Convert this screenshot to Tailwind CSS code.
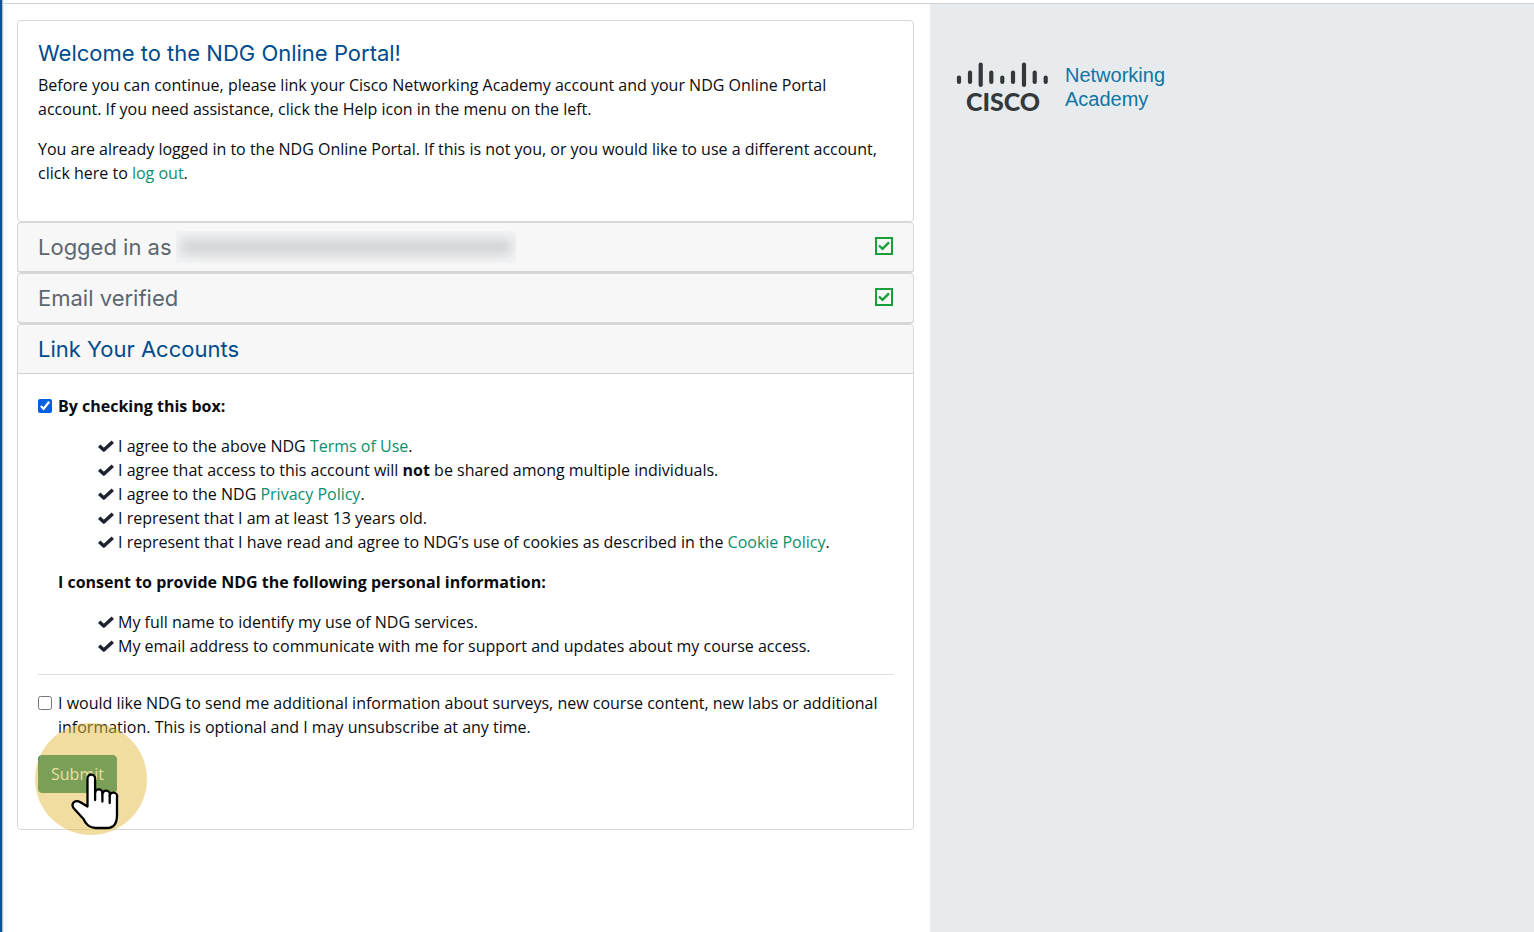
<!DOCTYPE html>
<html lang="en">
<head>
<meta charset="utf-8">
<meta name="viewport" content="width=device-width, initial-scale=1">
<title>NDG Online Portal</title>
<script src="https://cdn.jsdelivr.net/npm/@tailwindcss/browser@4"></script>
</head>
<body class="min-h-screen flex flex-col bg-white font-['Open_Sans',sans-serif] text-base text-[#0a0c0f]">
<svg class="hidden" aria-hidden="true">
  <symbol id="tick" viewBox="0 0 16 12"><path d="M1.200 5.800 L5.800 10 L14.800 1.800" fill="none" stroke="#1d242b" stroke-width="3.500" stroke-linejoin="round"/></symbol>
  <symbol id="boxtick" viewBox="0 0 18 18"><path d="M1 1H17V17H1Z" fill="none" stroke="currentColor" stroke-width="2"/><path d="M4 8.500 L7.500 11.800 L14 5.300" fill="none" stroke="currentColor" stroke-width="2.400"/></symbol>
</svg>
<div class="h-1 shrink-0 border-b border-[#cfd2d4]"></div>
<div class="grid flex-1 grid-cols-[4px_minmax(0,926fr)_minmax(0,604fr)]">
  <div class="-mt-1 border-l-2 border-[#0056a4] bg-linear-to-r from-[#a9a9b4] to-white"></div>
  <main class="pl-[13px] pr-4 pt-4 pb-6">
    <section class="rounded border border-[#d7d7d7] p-5">
      <h1 class="mb-2 font-[Inter,sans-serif] text-[22px] leading-6 text-[#004b8d]">Welcome to the NDG Online Portal!</h1>
      <p class="mb-4">Before you can continue, please link your Cisco Networking Academy account and your NDG Online Portal account. If you need assistance, click the Help icon in the menu on the left.</p>
      <p class="mb-4">You are already logged in to the NDG Online Portal. If this is not you, or you would like to use a different account, click here to <a href="#" class="text-[#0a8f6d]">log out</a>.</p>
    </section>
    <section class="flex h-[51px] items-center rounded border border-b-2 border-[#d7d7d7] bg-[#f7f7f7] px-5">
      <h2 class="font-[Inter,sans-serif] text-[22px] leading-6 text-[#5c666f]">Logged in as</h2>
      <div class="ml-1 flex h-8 w-[340px] items-center overflow-hidden bg-[#f3f4f5]"><div class="mx-1 h-4 w-full bg-[#d1d3d5] blur-[6px]"></div></div>
      <svg class="mb-0.5 ml-auto size-[18px] text-[#1a9e3a]" role="img" aria-label="Complete"><use href="#boxtick"/></svg>
    </section>
    <section class="flex h-[51px] items-center rounded border border-b-2 border-[#d7d7d7] bg-[#f7f7f7] px-5">
      <h2 class="font-[Inter,sans-serif] text-[22px] leading-6 text-[#5c666f]">Email verified</h2>
      <svg class="mb-0.5 ml-auto size-[18px] text-[#1a9e3a]" role="img" aria-label="Complete"><use href="#boxtick"/></svg>
    </section>
    <section class="rounded border border-[#d7d7d7]">
      <div class="rounded-t border-b border-[#cfcfcf] bg-[#f7f7f7] px-5 py-3">
        <h2 class="font-[Inter,sans-serif] text-[22px] leading-6 text-[#004b8d]">Link Your Accounts</h2>
      </div>
      <form class="p-5">
        <div class="mb-4 flex items-center gap-[6px]"><input id="agree" type="checkbox" checked class="size-[14px] accent-[#0060df]"><label for="agree" class="font-bold">By checking this box:</label></div>
        <ul class="mb-4 pl-[60px]">
          <li class="flex items-center gap-1"><svg class="h-3 w-4 shrink-0"><use href="#tick"/></svg><span>I agree to the above NDG <a href="#" class="text-[#0a8f6d]">Terms of Use</a>.</span></li>
          <li class="flex items-center gap-1"><svg class="h-3 w-4 shrink-0"><use href="#tick"/></svg><span>I agree that access to this account will <b>not</b> be shared among multiple individuals.</span></li>
          <li class="flex items-center gap-1"><svg class="h-3 w-4 shrink-0"><use href="#tick"/></svg><span>I agree to the NDG <a href="#" class="text-[#0a8f6d]">Privacy Policy</a>.</span></li>
          <li class="flex items-center gap-1"><svg class="h-3 w-4 shrink-0"><use href="#tick"/></svg><span>I represent that I am at least 13 years old.</span></li>
          <li class="flex items-center gap-1"><svg class="h-3 w-4 shrink-0"><use href="#tick"/></svg><span>I represent that I have read and agree to NDG’s use of cookies as described in the <a href="#" class="text-[#0a8f6d]">Cookie Policy</a>.</span></li>
        </ul>
        <p class="mb-4 pl-5 font-bold">I consent to provide NDG the following personal information:</p>
        <ul class="mb-4 pl-[60px]">
          <li class="flex items-center gap-1"><svg class="h-3 w-4 shrink-0"><use href="#tick"/></svg><span>My full name to identify my use of NDG services.</span></li>
          <li class="flex items-center gap-1"><svg class="h-3 w-4 shrink-0"><use href="#tick"/></svg><span>My email address to communicate with me for support and updates about my course access.</span></li>
        </ul>
        <hr class="mb-4 border-[#dcdcdc]">
        <div class="mb-4 flex items-start gap-[6px]"><input id="news" type="checkbox" class="mt-[5px] size-[14px] shrink-0"><label for="news">I would like NDG to send me additional information about surveys, new course content, new labs or additional information. This is optional and I may unsubscribe at any time.</label></div>
        <div class="relative mb-4 w-fit">
          <button type="submit" class="block rounded border border-[#13856f] bg-[#13856f] px-3 py-[6px] text-white">Submit</button>
          <div class="absolute -left-[3px] -top-8 size-28 rounded-full bg-[#e1bb3f]/50"></div>
          <svg class="absolute left-8 top-[17px] h-[58px] w-[50px]" viewBox="0 0 50 58" fill="#fff" stroke="#000" stroke-width="2.300" stroke-linejoin="round" stroke-linecap="round"><path d="M17.500 33V6.500a3.800 3.800 0 0 1 7.600 0V20.500a3.500 3.500 0 0 1 7.300 1a3.500 3.500 0 0 1 7.300 1.800a3.500 3.500 0 0 1 7.300 2.200V43C47 51 44 56 37 56H25.500C20 56 15.500 52 13.500 47L3.500 36C0.500 31 5.500 27.500 10 30L17.500 34.500Z"/><path d="M25.100 20.500V28M32.400 21.500V29.500M39.700 23.500V31" fill="none"/></svg>
        </div>
      </form>
    </section>
  </main>
  <aside class="bg-[#e7ebee] px-6 pt-[58px]">
    <div class="flex gap-4">
      <svg class="h-[50px] w-[95px] shrink-0 overflow-visible" viewBox="0 0 95 50" role="img" aria-label="Cisco">
        <path d="M5 15.500V20M16 10.500V20M26.700 2.500V23M37.300 10.500V20M48.300 15.500V20M59 10.500V20M70 2.500V23M80.700 10.500V20M91.700 15.500V20" fill="none" stroke="#34383b" stroke-width="4.200" stroke-linecap="round"/>
        <text x="49" y="49" text-anchor="middle" fill="#34383b" class="font-[Lato,sans-serif] text-[25px] font-black">CISCO</text>
      </svg>
      <div class="mt-px font-['Liberation_Sans',sans-serif] text-xl leading-6 text-[#0f75a3]">Networking<br>Academy</div>
    </div>
  </aside>
</div>
</body>
</html>
